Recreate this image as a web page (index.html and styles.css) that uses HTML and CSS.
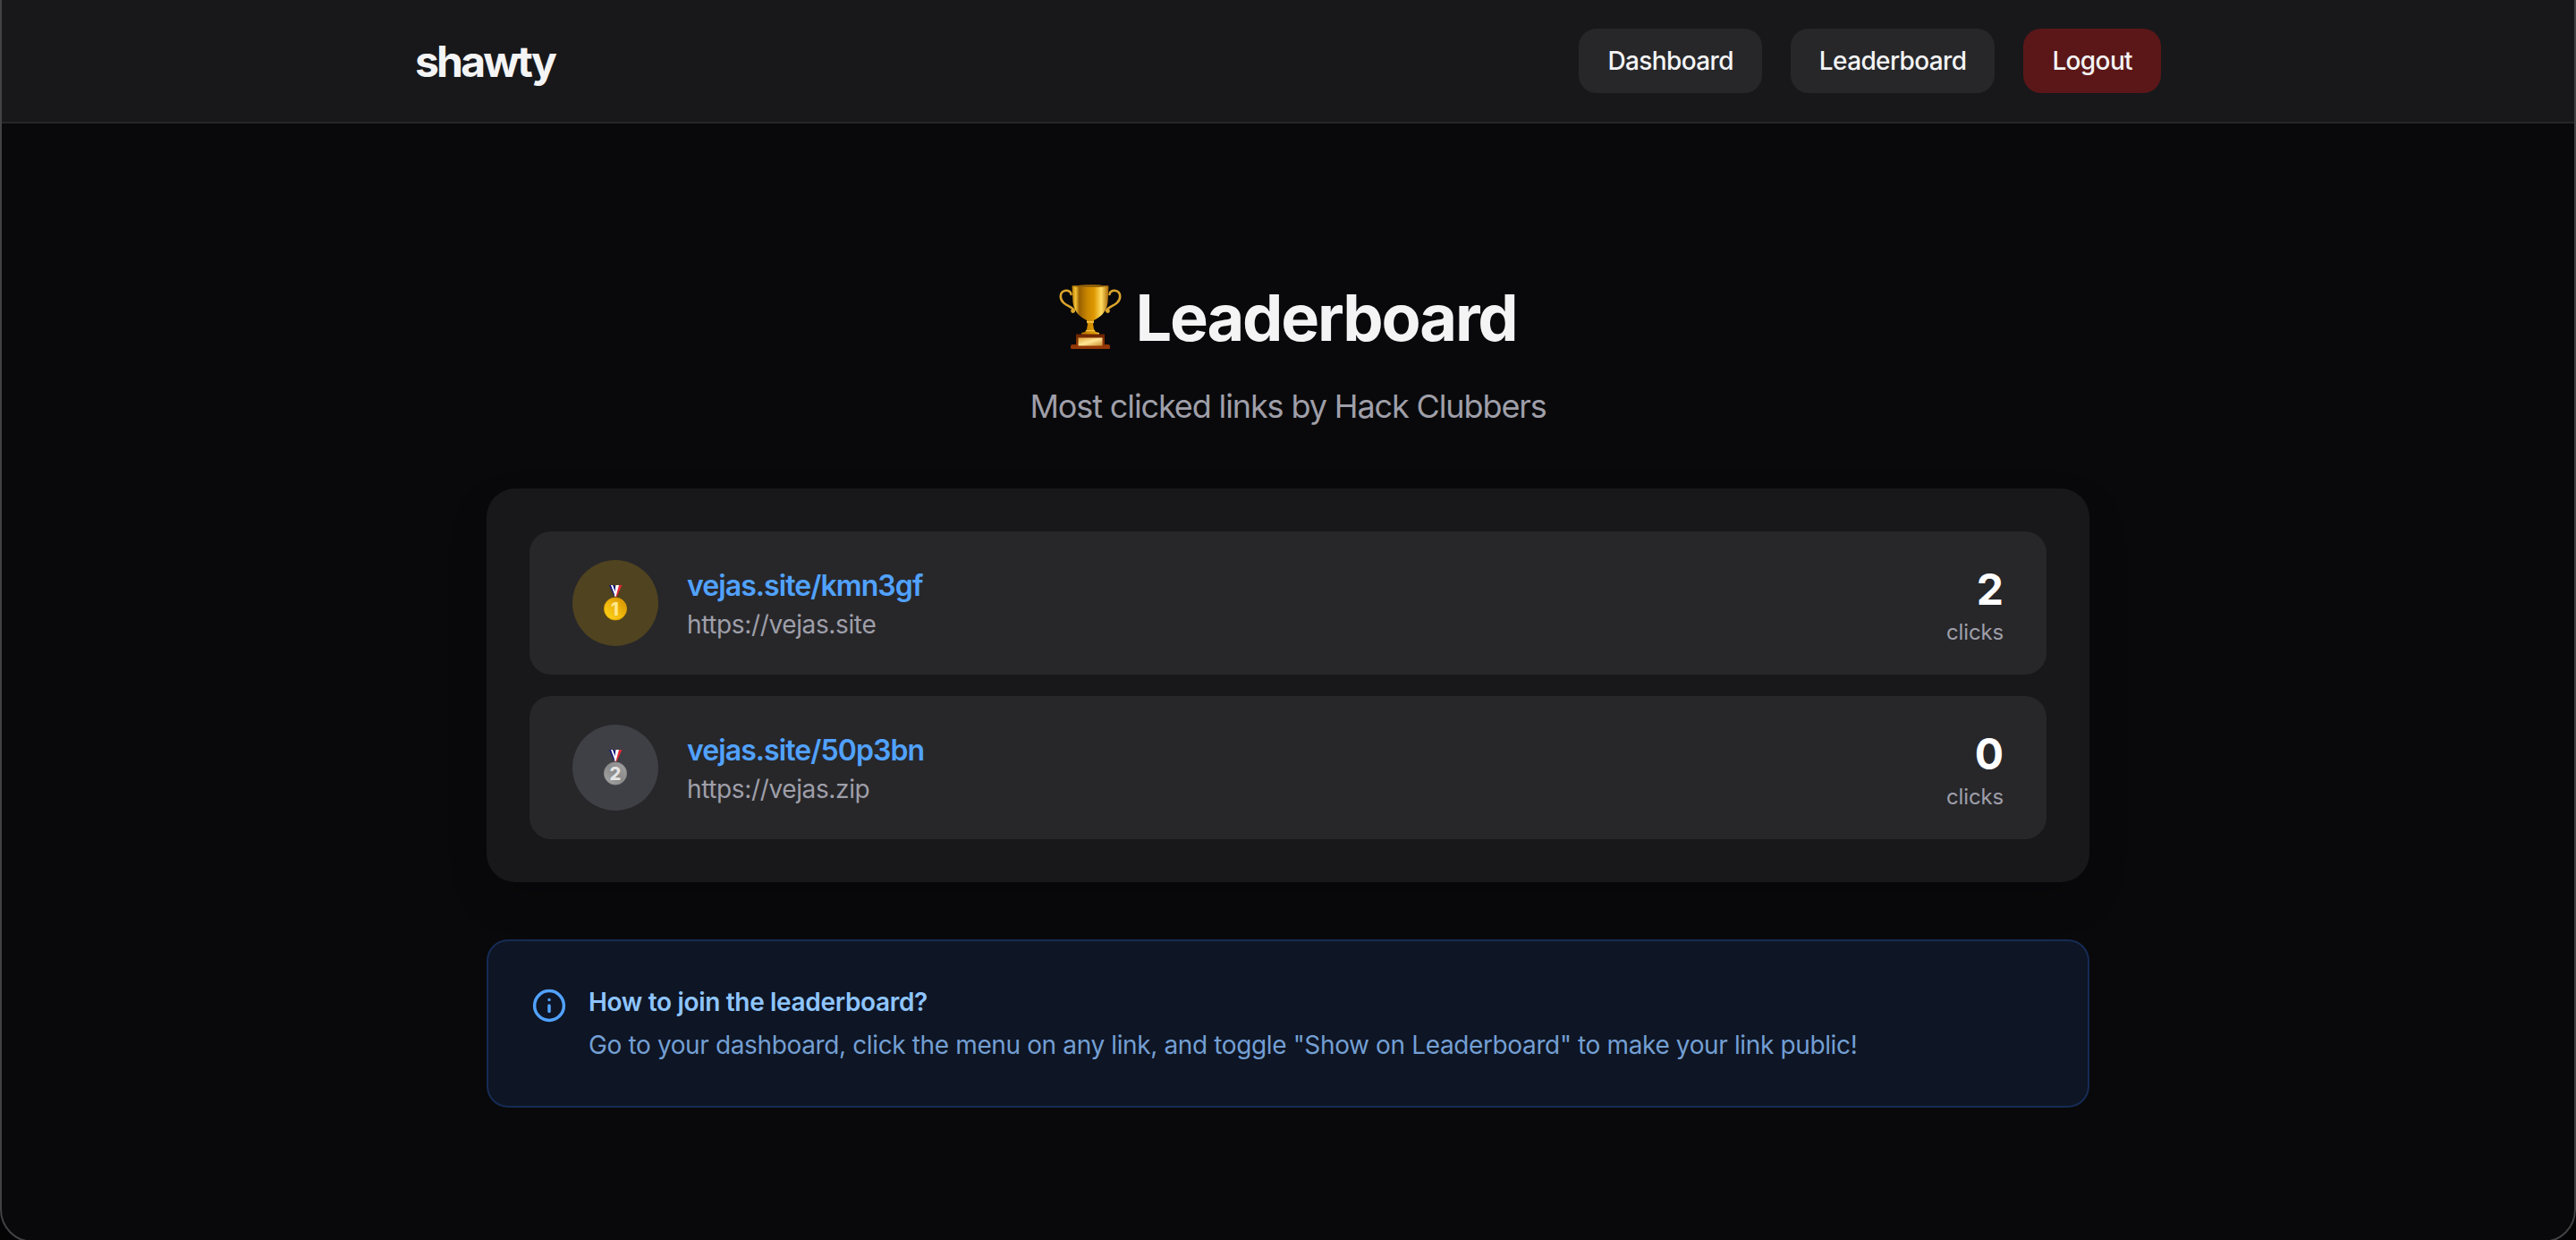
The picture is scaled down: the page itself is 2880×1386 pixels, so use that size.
FILE: index.html
```html
<!DOCTYPE html>
<html lang="en">
<head>
  <meta charset="UTF-8">
  <meta name="viewport" content="width=device-width, initial-scale=1.0">
  <title>Leaderboard - shawty</title>
  <link rel="stylesheet" href="styles.css">
</head>
<body>
  <!-- Navigation -->
  <nav class="navbar">
    <div class="nav-inner">
      <a href="/" class="logo">shawty</a>
      <div class="nav-links">
        <a href="/dashboard" class="nav-button">Dashboard</a>
        <a href="/leaderboard" class="nav-button">Leaderboard</a>
        <a href="/logout" class="nav-button logout">Logout</a>
      </div>
    </div>
  </nav>

  <main class="container">
    <header class="page-header">
      <h1>
        <svg class="trophy" viewBox="0 0 70 72" aria-hidden="true">
          <defs>
            <linearGradient id="cup" x1="0" x2="1">
              <stop offset="0" stop-color="#b97800" />
              <stop offset=".1" stop-color="#f3c136" />
              <stop offset=".2" stop-color="#9a6000" />
              <stop offset=".42" stop-color="#c98700" />
              <stop offset=".6" stop-color="#dd9700" />
              <stop offset=".8" stop-color="#ffdc62" />
              <stop offset="1" stop-color="#a86500" />
            </linearGradient>
            <linearGradient id="base" x1="0" x2="0" y1="0" y2="1">
              <stop offset="0" stop-color="#6b2400" />
              <stop offset="1" stop-color="#9a3a08" />
            </linearGradient>
            <linearGradient id="plate" x1="0" x2="1" y1="0" y2="1">
              <stop offset="0" stop-color="#e0a63c" />
              <stop offset=".5" stop-color="#ffe596" />
              <stop offset="1" stop-color="#cc8d2c" />
            </linearGradient>
          </defs>
          <g fill="none" stroke="#dca52b" stroke-width="2.6" stroke-linecap="round">
            <path d="M13.500 11C13 5 2 5 1.800 13C1.500 22 13 24 16.500 28C18 31 14 31.500 14.500 29" />
            <path d="M56.500 11C57 5 68 5 68.200 13C68.500 22 57 24 53.500 28C52 31 56 31.500 55.500 29" />
          </g>
          <path fill="url(#cup)" d="M14.500 1.500C27 0 43 0 55.500 1.500L54.500 20C53 32 45 37 39 40V42L38 44L39 50L41 53L45 54V56H25V54L29 53L31 50L32 44L31 42V40C25 37 17 32 15.500 20Z" />
          <ellipse cx="35" cy="1.800" rx="20" ry="1.300" fill="#94620a" />
          <path fill="#f2c54c" d="M31 41H39V42.800H31ZM30 51H40V52.300H30Z" />
          <path fill="url(#base)" d="M19 55.500H51V67H55Q57 67 57 69V71Q57 72 55.500 72H14.500Q13 72 13 71V69Q13 67 15 67H19Z" />
          <path fill="url(#plate)" d="M21.500 59.500H48.500V68.500H21.500Z" />
        </svg>
        Leaderboard
      </h1>
      <p>Most clicked links by Hack Clubbers</p>
    </header>

    <!-- Rankings -->
    <section class="board">
      <div class="entry">
        <div class="rank gold">
          <svg class="medal" viewBox="0 0 28 40" aria-hidden="true">
            <defs>
              <linearGradient id="gold" x1="0" x2="1" y1="1" y2="0">
                <stop offset="0" stop-color="#ffd91a" />
                <stop offset=".5" stop-color="#efb60d" />
                <stop offset="1" stop-color="#d28e00" />
              </linearGradient>
            </defs>
            <path fill="#11157f" d="M7 0H13L16 9L13 13Z" />
            <path fill="#fff" d="M9 0H11L15 11H13.200Z" />
            <path fill="#e02834" d="M16 0H21.500L15.500 13H13Z" />
            <path fill="#fff" d="M14.500 0H18L14.500 13L12.800 12Z" />
            <circle cx="14" cy="26.500" r="12.600" fill="url(#gold)" stroke="#d99a04" stroke-width=".8" />
            <text x="13.300" y="34" fill="#ffe88c">1</text>
          </svg>
        </div>
        <div class="entry-info">
          <a href="#" class="short-link">vejas.site/kmn3gf</a>
          <span class="target">https://vejas.site</span>
        </div>
        <div class="clicks">
          <strong>2</strong>
          <span>clicks</span>
        </div>
      </div>

      <div class="entry">
        <div class="rank silver">
          <svg class="medal" viewBox="0 0 28 40" aria-hidden="true">
            <defs>
              <linearGradient id="silver" x1="0" x2="1" y1="1" y2="0">
                <stop offset="0" stop-color="#aaa" />
                <stop offset=".5" stop-color="#8b8b8b" />
                <stop offset="1" stop-color="#a5a5a5" />
              </linearGradient>
            </defs>
            <path fill="#11157f" d="M7 0H13L16 9L13 13Z" />
            <path fill="#fff" d="M9 0H11L15 11H13.200Z" />
            <path fill="#e02834" d="M16 0H21.500L15.500 13H13Z" />
            <path fill="#fff" d="M14.500 0H18L14.500 13L12.800 12Z" />
            <circle cx="14" cy="26.500" r="12.600" fill="url(#silver)" stroke="#8a8a8a" stroke-width=".8" />
            <text x="14" y="33.500" fill="#e4e4e4">2</text>
          </svg>
        </div>
        <div class="entry-info">
          <a href="#" class="short-link">vejas.site/50p3bn</a>
          <span class="target">https://vejas.zip</span>
        </div>
        <div class="clicks">
          <strong>0</strong>
          <span>clicks</span>
        </div>
      </div>
    </section>

    <!-- Help box -->
    <section class="info-box">
      <svg class="info-icon" viewBox="0 0 20 20" aria-hidden="true">
        <circle cx="10" cy="10" r="8.200" />
        <path d="M10 10V13.200M10 6.700V6.750" />
      </svg>
      <div>
        <h2>How to join the leaderboard?</h2>
        <p>Go to your dashboard, click the menu on any link, and toggle "Show on Leaderboard" to make your link public!</p>
      </div>
    </section>
  </main>

  <div class="window-frame"></div>
</body>
</html>
```
FILE: styles.css
```css
* {
  box-sizing: border-box;
  margin: 0;
  padding: 0;
}

html {
  background-color: #000;
}

body {
  height: 1386px;
  overflow: hidden;
  background-color: #09090b;
  color: #f4f4f5;
  font-family: Inter, "Liberation Sans", sans-serif;
}

a {
  color: inherit;
  text-decoration: none;
}

/* Navigation */
.navbar {
  height: 138px;
  background-color: #18181b;
  border-bottom: 2px solid #27272a;
}

.nav-inner {
  display: flex;
  align-items: center;
  justify-content: space-between;
  max-width: 2048px;
  height: 136px;
  margin: 0 auto;
  padding: 0 48px;
}

.logo {
  padding-top: 2px;
  font-size: 48px;
  line-height: 64px;
  font-weight: 700;
  letter-spacing: -2.8px;
}

.nav-links {
  display: flex;
  gap: 32px;
}

.nav-button {
  padding: 16px 32px;
  border-radius: 20px;
  background-color: #27272a;
  font-size: 28px;
  line-height: 40px;
  font-weight: 500;
  letter-spacing: -0.63px;
}

.logout {
  background-color: #5b1718;
}

/* Page */
.container {
  max-width: 1792px;
  margin: 0 auto;
  padding-top: 176px;
}

.page-header {
  height: 232px;
  text-align: center;
}

h1 {
  display: flex;
  align-items: center;
  justify-content: center;
  gap: 15px;
  height: 80px;
  padding-top: 2px;
  font-size: 72px;
  line-height: 78px;
  font-weight: 700;
  letter-spacing: -2.15px;
}

.trophy {
  width: 70px;
  height: 72px;
  margin-bottom: 2px;
}

.page-header p {
  margin-top: 32px;
  color: #9f9fa9;
  font-size: 36px;
  line-height: 56px;
  letter-spacing: -1.12px;
}

.board {
  display: flex;
  flex-direction: column;
  gap: 24px;
  padding: 48px;
  border-radius: 32px;
  background-color: #18181b;
  box-shadow: 0 20px 50px -10px rgba(0, 0, 0, 0.25);
}

.entry {
  display: flex;
  align-items: center;
  gap: 32px;
  height: 160px;
  padding: 0 48px;
  border-radius: 24px;
  background-color: #27272a;
}

.rank {
  display: flex;
  align-items: center;
  justify-content: center;
  width: 96px;
  height: 96px;
  border-radius: 50%;
}

.gold {
  background-color: #50431f;
}

.silver {
  background-color: #3f3f46;
}

.medal {
  width: 28px;
  height: 40px;
}

.medal text {
  font-size: 20px;
  font-weight: 800;
  text-anchor: middle;
}

.entry-info {
  display: flex;
  flex: 1;
  flex-direction: column;
  padding: 1px 0;
}

.short-link {
  color: #51a2ff;
  font-size: 32px;
  line-height: 48px;
  font-weight: 600;
  letter-spacing: -0.92px;
}

.target {
  color: #9f9fa9;
  font-size: 28px;
  line-height: 38px;
  letter-spacing: -0.37px;
}

.clicks {
  display: flex;
  flex-direction: column;
  padding-top: 2px;
  text-align: right;
}

.clicks strong {
  color: #fff;
  font-size: 48px;
  line-height: 64px;
  font-weight: 700;
}

.clicks span {
  color: #9f9fa9;
  font-size: 24px;
  line-height: 32px;
  letter-spacing: -0.15px;
}

/* Help box */
.info-box {
  display: flex;
  gap: 24px;
  height: 188px;
  margin-top: 64px;
  padding: 48px;
  border: 2px solid #162b55;
  border-radius: 24px;
  background-color: #0e1524;
}

.info-icon {
  width: 40px;
  height: 40px;
  margin-top: 4px;
  fill: none;
  stroke: #51a2ff;
  stroke-width: 1.75;
  stroke-linecap: round;
}

.info-box h2 {
  color: #8ec5ff;
  font-size: 28px;
  line-height: 40px;
  font-weight: 600;
  letter-spacing: -0.33px;
}

.info-box p {
  margin-top: 8px;
  color: #739fd3;
  font-size: 28px;
  line-height: 40px;
  letter-spacing: -0.37px;
}

/* Rounded outline of the window, black outside its corners */
.window-frame {
  position: fixed;
  inset: -60px 0 -3px 0;
  border: 2px solid #424244;
  border-radius: 37px;
  box-shadow: 0 0 0 40px #040405;
  pointer-events: none;
}
```
